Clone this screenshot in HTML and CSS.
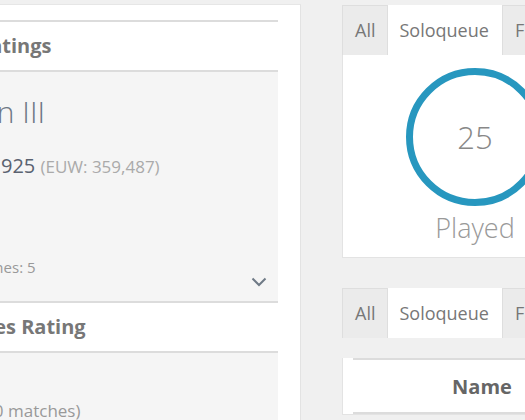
FILE: index.html
```html
<!DOCTYPE html>
<html>
  <head>
    <link rel="stylesheet" href="styles.css">
  </head>
  <body>
    <div class="page">
      <div class="col-left">
        <div class="card">
          <section class="rating">
            <h3 class="rating-head">LP Ratings</h3>
            <div class="rating-body">
              <div class="tier">Iron III</div>
              <div class="ladder">#11,925 <span class="region">(EUW: 359,487)</span></div>
              <div class="record">Matches: 5</div>
              <div class="more">
                <svg width="16" height="10" viewBox="0 0 16 10"><polyline points="1.5,1.5 8,8 14.5,1.5" fill="none" stroke="#6f7a86" stroke-width="2"/></svg>
              </div>
            </div>
          </section>
          <section class="rating">
            <h3 class="rating-head">Games Rating</h3>
            <div class="rating-body">
              <div class="note">(in 20 matches)</div>
            </div>
          </section>
        </div>
      </div>

      <div class="col-right">
        <div class="tabbed">
          <ul class="tabs">
            <li>All</li>
            <li class="active">Soloqueue</li>
            <li>Flex</li>
          </ul>
          <div class="tab-pane played">
            <div class="ring">
              <svg width="138" height="138" viewBox="0 0 138 138"><circle cx="69" cy="69" r="65.5" fill="none" stroke="#2797bf" stroke-width="7"/></svg>
              <span class="ring-value">25</span>
            </div>
            <div class="ring-label">Played</div>
          </div>
        </div>

        <div class="tabbed">
          <ul class="tabs">
            <li>All</li>
            <li class="active">Soloqueue</li>
            <li>Flex</li>
          </ul>
          <div class="tab-pane">
            <table class="champs">
              <thead>
                <tr><th class="icon-col"></th><th class="name-col">Name</th><th>Games</th></tr>
              </thead>
            </table>
          </div>
        </div>
      </div>
    </div>
  </body>
</html>
```

FILE: styles.css
```css
* {
  box-sizing: border-box;
}

html {
  font-family: "Open Sans", sans-serif;
}

body {
  margin: 0;
  background: #f0f0f0;
  overflow: hidden;
}

.page {
  display: flex;
  align-items: flex-start;
  gap: 41px;
  padding-top: 4px;
}

/* left column: rating cards */
.col-left {
  flex: 0 0 auto;
  margin-left: -52px;
}

.card {
  width: 353px;
  height: 430px;
  background: #fff;
  border-top: 1px solid #e6e6e6;
  border-right: 1px solid #e3e3e3;
  padding: 15px 22px 0 0;
}

.rating {
  border-top: 2px solid #dcdcdc;
}

.rating-head {
  margin: 0;
  height: 50px;
  line-height: 48px;
  border-bottom: 2px solid #dcdcdc;
  font-size: 20px;
  font-weight: 700;
  color: #777;
}

.rating-body {
  background: #f5f5f5;
  height: 229px;
  padding: 22px 11px 0 12px;
}

.tier {
  font-size: 30px;
  font-weight: 300;
  line-height: 36px;
  color: #6f7885;
}

.ladder {
  margin-top: 22px;
  font-size: 20px;
  line-height: 28px;
  color: #5a6270;
}

.region {
  font-size: 17px;
  color: #aaa;
}

.record {
  margin-top: 76px;
  font-size: 15px;
  line-height: 20px;
  color: #999;
}

.more {
  display: flex;
  justify-content: flex-end;
}

.note {
  margin-top: 24px;
  font-size: 17px;
  color: #999;
}

/* right column: tabbed stats */
.col-right {
  flex: 0 0 266px;
  min-width: 0;
  display: flex;
  flex-direction: column;
  gap: 30px;
  padding-top: 1px;
}

.tabs {
  display: flex;
  margin: 0;
  padding: 0;
  list-style: none;
}

.tabs li {
  height: 50px;
  line-height: 49px;
  padding: 0 12px;
  font-size: 18px;
  color: #777;
  background: #ebebeb;
  border: 1px solid #dedede;
  border-bottom: none;
  white-space: nowrap;
}

.tabs li.active {
  background: #fff;
  border-color: #fff;
  padding-left: 10px;
}

.tab-pane {
  background: #fff;
  border: 1px solid #e3e3e3;
  border-top: none;
  padding: 0 10px;
}

.played {
  height: 203px;
  display: flex;
  flex-direction: column;
  align-items: center;
  padding-top: 13px;
}

.ring {
  display: grid;
  place-items: center;
}

.ring svg,
.ring-value {
  grid-area: 1 / 1;
}

.ring-value {
  font-size: 31px;
  font-weight: 300;
  color: #888;
}

.ring-label {
  margin-top: 4px;
  font-size: 27px;
  font-weight: 300;
  line-height: 36px;
  color: #999;
}

.champs {
  width: 100%;
  table-layout: fixed;
  margin-top: 20px;
  border-collapse: collapse;
}

.champs th {
  height: 54px;
  border-top: 2px solid #dcdcdc;
  border-bottom: 2px solid #dcdcdc;
  font-size: 20px;
  font-weight: 700;
  color: #666;
  white-space: nowrap;
}

.champs .icon-col {
  width: 46px;
}

.champs .name-col {
  width: 166px;
}
```
